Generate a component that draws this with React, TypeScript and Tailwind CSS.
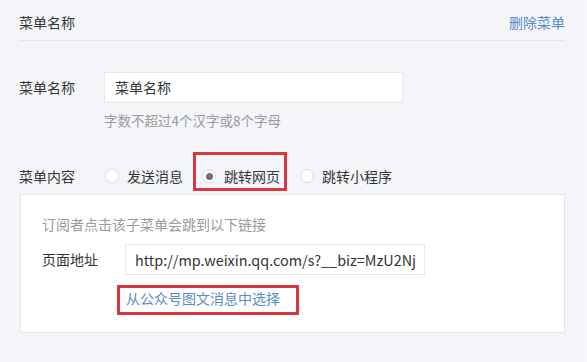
import * as React from "react";

const cjk = { fontFamily: '"Noto Sans CJK SC", "Noto Sans", sans-serif' };

const Radio = ({ checked }: { checked?: boolean }) => (
  <span className="flex h-[14px] w-[14px] shrink-0 items-center justify-center rounded-full border border-[#dcdcdc] bg-white">
    {checked && <span className="h-[7px] w-[7px] rounded-full bg-[#707070]" />}
  </span>
);

const options = [
  { label: "发送消息", checked: false, ml: "ml-0" },
  { label: "跳转网页", checked: true, ml: "ml-[19px]" },
  { label: "跳转小程序", checked: false, ml: "ml-[20px]" },
];

export default function App() {
  return (
    <div className="flex h-[362px] w-[587px] bg-[#f7f8fb]" style={cjk}>
      <div className="h-full w-[583px] bg-[#f4f5f9] pl-[19px] pr-[18px] text-[14px] text-[#353535]">
        {/* header */}
        <div className="flex items-center justify-between border-b border-[#e4e6eb] pt-[12px] pb-[8px] leading-[20px]">
          <span>菜单名称</span>
          <a className="text-[#5a8bc6]">删除菜单</a>
        </div>

        {/* name row */}
        <div className="mt-[31px] flex">
          <span className="w-[85px] leading-[31px]">菜单名称</span>
          <div>
            <div className="flex h-[31px] w-[299px] items-center border border-[#e7e7eb] bg-white px-[10px]">
              菜单名称
            </div>
            <p className="mt-[7px] text-[13.5px] leading-[20px] text-[#9a9a9a]">
              字数不超过4个汉字或8个字母
            </p>
          </div>
        </div>

        {/* content type row */}
        <div className="mt-[36px] flex items-center leading-[20px]">
          <span className="w-[86px]">菜单内容</span>
          {options.map((o) => (
            <label key={o.label} className={`relative flex items-center ${o.ml}`}>
              <Radio checked={o.checked} />
              <span className="ml-[8px]">{o.label}</span>
              {o.checked && (
                <span className="pointer-events-none absolute -top-[14px] -bottom-[5px] -left-[9px] -right-[7px] border-[3px] border-[#d9363e]" />
              )}
            </label>
          ))}
        </div>

        {/* panel */}
        <div className="mt-[8px] ml-[1px] border border-[#e4e6eb] bg-white pt-[19px] pb-[24px] pl-[21px] leading-[20px]">
          <p className="text-[#9a9a9a]">订阅者点击该子菜单会跳到以下链接</p>
          <div className="mt-[10px] flex">
            <span className="w-[83px] leading-[31px]">页面地址</span>
            <div className="flex h-[31px] w-[300px] items-center overflow-hidden whitespace-nowrap border border-[#e7e7eb] bg-white pl-[9px] text-[14.4px]">
              http://mp.weixin.qq.com/s?__biz=MzU2Nj
            </div>
          </div>
          <div className="mt-[13px] pl-[84px]">
            <a className="relative inline-block text-[#5a8bc6]">
              从公众号图文消息中选择
              <span className="pointer-events-none absolute -top-[3px] -bottom-[7px] -left-[9px] -right-[19px] border-[3px] border-[#d9363e]" />
            </a>
          </div>
        </div>
      </div>
    </div>
  );
}
